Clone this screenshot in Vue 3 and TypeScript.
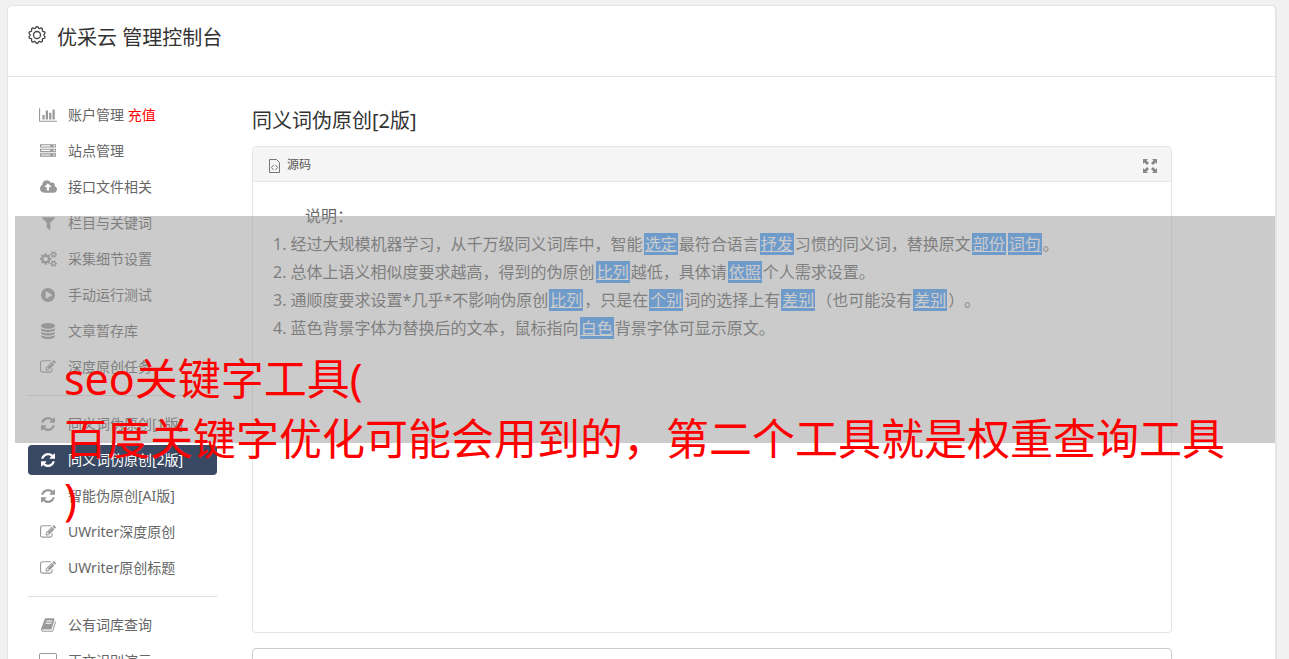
<script setup lang="ts">
interface Icon {
  box: string
  w: number
  h: number
  d: string
}

interface MenuItem {
  label: string
  icon: string
  extra?: string
  active?: boolean
}

interface Part {
  text: string
  swapped?: boolean
}

const icons: Record<string, Icon> = {
  chart: {
    box: '0 0 2048 1792', w: 18, h: 16,
    d: 'M640 896v512h-256v-512h256zm384-512v1024h-256v-1024h256zm1024 1152v128h-2048v-1536h128v1408h1920zm-640-896v768h-256v-768h256zm384-384v1152h-256v-1152h256z',
  },
  server: {
    box: '0 0 1792 1792', w: 16, h: 16,
    d: 'M128 1408h1024v-128h-1024v128zm0-512h1024v-128h-1024v128zm1568 448q0-40-28-68t-68-28-68 28-28 68 28 68 68 28 68-28 28-68zm-1568-960h1024v-128h-1024v128zm1568 448q0-40-28-68t-68-28-68 28-28 68 28 68 68 28 68-28 28-68zm0-512q0-40-28-68t-68-28-68 28-28 68 28 68 68 28 68-28 28-68zm96 832v384h-1792v-384h1792zm0-512v384h-1792v-384h1792zm0-512v384h-1792v-384h1792z',
  },
  cloud: {
    box: '0 0 1920 1792', w: 17, h: 16,
    d: 'M1280 864q0-14-9-23l-352-352q-9-9-23-9t-23 9l-351 351q-10 12-10 24 0 14 9 23t23 9h224v352q0 13 9.500 22.500t22.500 9.500h192q13 0 22.500-9.500t9.500-22.500v-352h224q13 0 22.500-9.500t9.500-22.500zm640 288q0 159-112.500 271.500t-271.500 112.500h-1088q-185 0-316.500-131.500t-131.500-316.500q0-130 70-240t188-165q-2-30-2-43 0-212 150-362t362-150q156 0 285.500 87t188.500 231q71-62 166-62 106 0 181 75t75 181q0 76-41 138 130 31 213.500 135.500t83.500 238.500z',
  },
  filter: {
    box: '0 128 1408 1536', w: 13, h: 14,
    d: 'M1403 295q17 41-14 70l-493 493v742q0 42-39 59-13 5-25 5-27 0-45-19l-256-256q-19-19-19-45v-486l-493-493q-31-29-14-70 17-39 59-39h1280q42 0 59 39z',
  },
  cogs: {
    box: '0 0 1920 1792', w: 17, h: 16,
    d: 'M896 896q0-106-75-181t-181-75-181 75-75 181 75 181 181 75 181-75 75-181zm768 512q0-52-38-90t-90-38-90 38-38 90q0 53 37.500 90.500t90.500 37.500 90.500-37.500 37.500-90.500zm0-1024q0-52-38-90t-90-38-90 38-38 90q0 53 37.500 90.500t90.500 37.500 90.500-37.500 37.500-90.500zm-384 421v185q0 10-7 19.500t-16 10.500l-155 24q-11 35-32 76 34 48 90 115 7 11 7 20 0 12-7 19-23 30-82.500 89.500t-78.500 59.500q-11 0-21-7l-115-90q-37 19-77 31-11 108-23 155-7 24-30 24h-186q-11 0-20-7.500t-10-17.500l-23-153q-34-10-75-31l-118 89q-7 7-20 7-11 0-21-8-144-133-144-160 0-9 7-19 10-14 41-53t47-61q-23-44-35-82l-152-24q-10-1-17-9.500t-7-19.500v-185q0-10 7-19.500t16-10.500l155-24q11-35 32-76-34-48-90-115-7-11-7-20 0-12 7-20 22-30 82-89t79-59q11 0 21 7l115 90q34-18 77-32 11-108 23-154 7-24 30-24h186q11 0 20 7.500t10 17.500l23 153q34 10 75 31l118-89q8-7 20-7 11 0 21 8 144 133 144 160 0 8-7 19-12 16-42 54t-45 60q23 48 34 82l152 23q10 2 17 10.500t7 19.500zm640 533v140q0 16-149 31-12 27-30 52 51 113 51 138 0 4-4 7-122 71-124 71-8 0-46-47t-52-68q-20 2-30 2t-30-2q-14 21-52 68t-46 47q-2 0-124-71-4-3-4-7 0-25 51-138-18-25-30-52-149-15-149-31v-140q0-16 149-31 13-29 30-52-51-113-51-138 0-4 4-7 4-2 35-20t59-34 30-16q8 0 46 46.500t52 67.500q20-2 30-2t30 2q51-71 92-112l6-2q4 0 124 70 4 3 4 7 0 25-51 138 17 23 30 52 149 15 149 31zm0-1024v140q0 16-149 31-12 27-30 52 51 113 51 138 0 4-4 7-122 71-124 71-8 0-46-47t-52-68q-20 2-30 2t-30-2q-14 21-52 68t-46 47q-2 0-124-71-4-3-4-7 0-25 51-138-18-25-30-52-149-15-149-31v-140q0-16 149-31 13-29 30-52-51-113-51-138 0-4 4-7 4-2 35-20t59-34 30-16q8 0 46 46.500t52 67.500q20-2 30-2t30 2q51-71 92-112l6-2q4 0 124 70 4 3 4 7 0 25-51 138 17 23 30 52 149 15 149 31z',
  },
  play: {
    box: '0 128 1536 1536', w: 14, h: 14,
    d: 'M768 128q209 0 385.500 103t279.500 279.500 103 385.500-103 385.500-279.500 279.500-385.500 103-385.500-103-279.500-279.500-103-385.500 103-385.500 279.500-279.500 385.500-103zm384 823q32-18 32-55t-32-55l-544-320q-31-19-64-1-32 19-32 56v640q0 37 32 56 16 8 32 8 17 0 32-9z',
  },
  database: {
    box: '0 0 1536 1792', w: 14, h: 16,
    d: 'M768 768q237 0 443-43t325-127v170q0 69-103 128t-280 93.500-385 34.500-385-34.500-280-93.500-103-128v-170q119 84 325 127t443 43zm0 768q237 0 443-43t325-127v170q0 69-103 128t-280 93.500-385 34.500-385-34.500-280-93.500-103-128v-170q119 84 325 127t443 43zm0-384q237 0 443-43t325-127v170q0 69-103 128t-280 93.500-385 34.500-385-34.500-280-93.500-103-128v-170q119 84 325 127t443 43zm0-1152q208 0 385 34.500t280 93.500 103 128v128q0 69-103 128t-280 93.500-385 34.500-385-34.500-280-93.500-103-128v-128q0-69 103-128t280-93.500 385-34.500z',
  },
  edit: {
    box: '0 0 1792 1792', w: 16, h: 16,
    d: 'M888 1184l116-116-152-152-116 116v56h96v96h56zm440-720q-16-16-33 1l-350 350q-17 17-1 33t33-1l350-350q17-17 1-33zm80 594v190q0 119-84.500 203.500t-203.500 84.500h-832q-119 0-203.500-84.500t-84.500-203.500v-832q0-119 84.500-203.500t203.500-84.500h832q63 0 117 25 15 7 18 23 3 17-9 29l-49 49q-14 14-32 8-23-6-45-6h-832q-66 0-113 47t-47 113v832q0 66 47 113t113 47h832q66 0 113-47t47-113v-126q0-13 9-22l64-64q15-15 35-7t20 29zm-96-738l288 288-672 672h-288v-288zm444 132l-92 92-288-288 92-92q28-28 68-28t68 28l152 152q28 28 28 68t-28 68z',
  },
  refresh: {
    box: '0 0 1536 1536', w: 14, h: 14,
    d: 'M1511 928q0 5-1 7-64 268-268 434.500t-478 166.500q-146 0-282.500-55t-243.500-157l-129 129q-19 19-45 19t-45-19-19-45v-448q0-26 19-45t45-19h448q26 0 45 19t19 45-19 45l-137 137q71 66 161 102t187 36q134 0 250-65t186-179q11-17 53-117 8-23 30-23h192q13 0 22.500 9.500t9.500 22.500zm25-800v448q0 26-19 45t-45 19h-448q-26 0-45-19t-19-45 19-45l138-138q-148-137-349-137-134 0-250 65t-186 179q-11 17-53 117-8 23-30 23h-199q-13 0-22.500-9.500t-9.500-22.500v-7q65-268 270-434.500t480-166.500q146 0 284 55.500t245 156.500l130-129q19-19 45-19t45 19 19 45z',
  },
  book: {
    box: '0 0 1664 1792', w: 15, h: 16,
    d: 'M1639 478q40 57 18 129l-275 906q-19 64-76.500 107.500t-122.500 43.500h-923q-77 0-148.500-53.500t-99.500-131.500q-24-67-2-127 0-4 3-27t4-37q1-8-3-21.500t-3-19.500q2-11 8-21t16.500-23.500 16.500-23.500q23-38 45-91.500t30-91.500q3-10 .5-30t-.5-28q3-11 17-28t17-23q21-36 42-92t25-90q1-9-2.500-32t.5-28q4-13 22-30.500t22-22.500q19-26 42.500-84.500t27.500-96.500q1-8-3-25.500t-2-26.500q2-8 9-18t18-23 17-21q8-12 16.500-30.500t15-35 16-36 19.500-32 26.500-23.500 36-11.500 47.500 5.500l-1 3q38-9 51-9h761q74 0 114 56t18 130l-274 906q-36 119-71.500 153.500t-128.500 34.500h-869q-27 0-38 15-11 16-1 43 24 70 144 70h923q29 0 56-15.500t35-41.500l300-987q7-22 5-57 38 15 59 43zm-1064 2q-4 13 2 22.500t20 9.500h608q13 0 25.500-9.500t16.500-22.500l21-64q4-13-2-22.500t-20-9.500h-608q-13 0-25.500 9.500t-16.500 22.500zm-83 256q-4 13 2 22.500t20 9.500h608q13 0 25.500-9.500t16.500-22.500l21-64q4-13-2-22.500t-20-9.500h-608q-13 0-25.500 9.500t-16.500 22.500z',
  },
  screen: {
    box: '0 0 18 16', w: 18, h: 16,
    d: 'M2 0h14q2 0 2 2v9q0 2-2 2h-5v2h3v1h-10v-1h3v-2h-5q-2 0-2-2v-9q0-2 2-2zm0 1q-1 0-1 1v9q0 1 1 1h14q1 0 1-1v-9q0-1-1-1z',
  },
}

const groups: MenuItem[][] = [
  [
    { label: '账户管理', icon: 'chart', extra: '充值' },
    { label: '站点管理', icon: 'server' },
    { label: '接口文件相关', icon: 'cloud' },
    { label: '栏目与关键词', icon: 'filter' },
    { label: '采集细节设置', icon: 'cogs' },
    { label: '手动运行测试', icon: 'play' },
    { label: '文章暂存库', icon: 'database' },
    { label: '深度原创任务', icon: 'edit' },
  ],
  [
    { label: '同义词伪原创[1版]', icon: 'refresh' },
    { label: '同义词伪原创[2版]', icon: 'refresh', active: true },
    { label: '智能伪原创[AI版]', icon: 'refresh' },
    { label: 'UWriter深度原创', icon: 'edit' },
    { label: 'UWriter原创标题', icon: 'edit' },
  ],
  [
    { label: '公有词库查询', icon: 'book' },
    { label: '正文识别演示', icon: 'screen' },
  ],
]

// Words wrapped in braces are the replaced ones.
const parse = (line: string): Part[] =>
  line
    .split(/(\{[^}]+\})/)
    .filter((s) => s.length > 0)
    .map((s) => (s.startsWith('{') ? { text: s.slice(1, -1), swapped: true } : { text: s }))

const notes: Part[][] = [
  '经过大规模机器学习，从千万级同义词库中，智能{选定}最符合语言{抒发}习惯的同义词，替换原文{部份}{词句}。',
  '总体上语义相似度要求越高，得到的伪原创{比列}越低，具体请{依照}个人需求设置。',
  '通顺度要求设置*几乎*不影响伪原创{比列}，只是在{个别}词的选择上有{差别}（也可能没有{差别}）。',
  '蓝色背景字体为替换后的文本，鼠标指向{白色}背景字体可显示原文。',
].map(parse)

const captionLines = ['seo关键字工具(', '百度关键字优化可能会用到的，第二个工具就是权重查询工具', ')']

// Outline of the ten-lobed gear in the page header.
const gear = Array.from({ length: 81 }, (_, i) => {
  const a = (i / 80) * Math.PI * 2
  const r = 7.6 + 0.8 * Math.cos(a * 10)
  return `${(9 + r * Math.sin(a)).toFixed(2)} ${(9 - r * Math.cos(a)).toFixed(2)}`
}).join(' ')
</script>

<template>
  <div class="page">
    <div class="card">
      <header class="top">
        <svg class="gear" viewBox="0 0 18 18" width="18" height="18" aria-hidden="true">
          <polygon :points="gear" />
          <circle cx="9" cy="9" r="3.5" />
        </svg>
        <h1>优采云 管理控制台</h1>
      </header>

      <div class="body">
        <nav class="menu">
          <template v-for="(group, g) in groups" :key="g">
            <hr v-if="g > 0" />
            <a
              v-for="item in group"
              :key="item.label"
              href="#"
              :class="{ active: item.active }"
            >
              <span class="icon">
                <svg
                  :viewBox="icons[item.icon].box"
                  :width="icons[item.icon].w"
                  :height="icons[item.icon].h"
                  aria-hidden="true"
                >
                  <path fill-rule="evenodd" :d="icons[item.icon].d" />
                </svg>
              </span>
              <span class="label">{{ item.label }} <em v-if="item.extra">{{ item.extra }}</em></span>
            </a>
          </template>
        </nav>

        <main class="content">
          <h2>同义词伪原创[2版]</h2>
          <section class="editor">
            <div class="toolbar">
              <button type="button" class="source">
                <svg viewBox="0 0 11 14" width="11" height="14" aria-hidden="true">
                  <path d="M.5.5h7l3 3v10h-10zM4.500 6l-2 2.500 2 2.500M6.500 6l2 2.500-2 2.500" />
                </svg>
                <span>源码</span>
              </button>
              <button type="button" class="full" aria-label="全屏">
                <svg viewBox="0 0 14 14" width="14" height="14" aria-hidden="true">
                  <path
                    d="M0 0h5L3.500 1.500 6 4 4 6 1.500 3.500 0 5zM14 0v5l-1.500-1.500L10 6 8 4l2.500-2.500L9 0zM0 14V9l1.500 1.500L4 8l2 2-2.500 2.500L5 14zM14 14H9l1.500-1.500L8 10l2-2 2.500 2.500L14 9z"
                  />
                </svg>
              </button>
            </div>
            <div class="text">
              <p>说明：</p>
              <ol>
                <li v-for="(line, i) in notes" :key="i">
                  <span class="num">{{ i + 1 }}. </span
                  ><template v-for="(part, j) in line" :key="j"
                    ><u v-if="part.swapped">{{ part.text }}</u
                    ><template v-else>{{ part.text }}</template></template
                  >
                </li>
              </ol>
            </div>
          </section>
          <textarea class="next" aria-label="结果"></textarea>
        </main>
      </div>
    </div>

    <div class="caption">
      <p v-for="line in captionLines" :key="line">{{ line }}</p>
    </div>
  </div>
</template>

<style>
html,
body {
  background: #f1f1f1;
  overflow: hidden;
}
</style>

<style scoped>
.page {
  position: relative;
  box-sizing: border-box;
  height: 100vh;
  overflow: hidden;
  padding: 5px 12px 0 7px;
  color: #666;
  font-family: "Noto Sans", "Noto Sans CJK SC", sans-serif;
  font-size: 14px;
  font-weight: 400;
  text-spacing-trim: space-all;
}

.card {
  min-height: 100vh;
  background: #fff;
  border: 1px solid #e5e5e5;
  border-right-width: 2px;
  border-radius: 5px;
}

.top {
  display: flex;
  align-items: flex-start;
  gap: 11px;
  height: 50px;
  padding: 20px 20px 0;
  border-bottom: 1px solid #e5e5e5;
}

.gear {
  fill: none;
  stroke: #444;
  stroke-width: 1.3;
}

h1,
h2 {
  margin: 0;
  color: #333;
  font-size: 20px;
  font-weight: 400;
  line-height: 24px;
}

.body {
  display: flex;
  gap: 35px;
  padding: 23px 103px 0 20px;
}

.menu {
  display: flex;
  flex: none;
  flex-direction: column;
  gap: 6px;
  width: 189px;
}

.menu a {
  display: flex;
  align-items: center;
  height: 30px;
  border-radius: 4px;
  color: #666;
  text-decoration: none;
}

.menu .icon {
  display: flex;
  justify-content: center;
  width: 40px;
  fill: #999;
}

.menu .label {
  line-height: 20px;
}

.menu em {
  color: #f00;
  font-style: normal;
}

.menu .active {
  background: #394963;
  color: #fff;
}

.menu .active .icon {
  fill: #fff;
}

.menu hr {
  width: 100%;
  height: 1px;
  margin: 7px 0;
  border: 0;
  background: #ddd;
}

.content {
  flex: 1;
  min-width: 0;
}

h2 {
  padding: 9px 0 13px;
}

.editor {
  min-height: 485px;
  border: 1px solid #e5e5e5;
  border-radius: 4px;
}

.toolbar {
  display: flex;
  align-items: center;
  justify-content: space-between;
  height: 34px;
  padding: 0 14px 0 16px;
  background: #f5f5f5;
  border-bottom: 1px solid #e5e5e5;
  border-radius: 3px 3px 0 0;
}

.toolbar button {
  display: flex;
  align-items: center;
  gap: 7px;
  padding: 0;
  border: 0;
  background: none;
  color: #555;
  font: inherit;
  font-size: 12px;
}

.source svg {
  margin-top: 4px;
  fill: none;
  stroke: #777;
}

.full svg {
  margin-top: 4px;
  fill: #888;
}

.text {
  padding: 20px;
  font-size: 16px;
  line-height: 28px;
}

.text p {
  margin: 0;
  text-indent: 2em;
}

.text ol {
  margin: 0;
  padding: 0;
  list-style: none;
}

.text u {
  margin: 0 1px;
  padding: 0 1px;
  background: #479eff;
  color: #fff;
}

.next {
  display: block;
  box-sizing: border-box;
  width: 100%;
  height: 100px;
  margin-top: 15px;
  border: 1px solid #ccc;
  border-radius: 4px;
  resize: none;
}

.caption {
  position: absolute;
  top: 216px;
  right: 14px;
  left: 15px;
  box-sizing: border-box;
  height: 227px;
  padding: 133px 0 0 49px;
  background: rgba(151, 151, 151, 0.5);
  color: #f00;
  font-size: 43px;
  font-weight: 400;
  line-height: 60px;
  white-space: nowrap;
}

.caption p {
  margin: 0;
}
</style>
